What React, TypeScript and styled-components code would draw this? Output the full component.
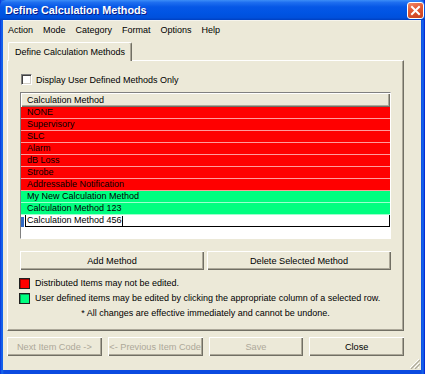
import styled, { createGlobalStyle } from "styled-components";

const Global = createGlobalStyle`
* { box-sizing: border-box; }
body {
  margin: 0;
  font-family: "Liberation Sans", Arial, sans-serif;
  font-size: 9px;
  color: #000;
}
`;

const Frame = styled.div`
width: 425px;
height: 374px;
display: flex;
flex-direction: column;
background: linear-gradient(90deg, #0831d9 0px, #166aee 2px, #0c4be0 4px, #0c4be0 421px, #166aee 423px, #0019cf 425px);
overflow: hidden;
`;

const TitleBar = styled.div`
height: 20px;
flex: none;
display: flex;
align-items: center;
justify-content: space-between;
padding: 0 5px 0 5px;
background: linear-gradient(180deg, #3d8ef7 0%, #1f6ff0 12%, #0657e6 35%, #0054e3 65%, #0050dc 88%, #0040c0 100%);
border-radius: 6px 6px 0 0;
`;

const Title = styled.div`
color: #fff;
font-weight: bold;
font-size: 10.8px;
text-shadow: 1px 1px 0 #0a1e8a;
`;

const CloseBox = styled.div`
width: 17px;
height: 17px;
margin-right: -4px;
border: 1px solid #fff;
border-radius: 3px;
background: linear-gradient(160deg, #f08a6a 0%, #e35a35 40%, #c8401c 100%);
display: flex;
align-items: center;
justify-content: center;
`;

const Client = styled.div`
flex: 1;
margin: 0 4px 4px 3px;
background: #ece9d8;
display: flex;
flex-direction: column;
position: relative;
`;

const MenuBar = styled.div`
height: 18px;
display: flex;
align-items: center;
padding-left: 0;
border-top: 1px solid #f6f4ec;
`;

const MenuItem = styled.span`
padding: 0 5px;
font-size: 9px;
`;

const Body = styled.div`
padding: 4px 0 0 4px;
display: flex;
flex-direction: column;
`;

const TabStrip = styled.div`
display: flex;
padding-left: 1px;
height: 18px;
`;

const Tab = styled.div`
height: 19px;
padding: 0 6px;
display: flex;
align-items: center;
background: #ece9d8;
border-top: 1px solid #fff;
border-left: 1px solid #fff;
border-right: 1px solid #716f64;
border-radius: 2px 2px 0 0;
box-shadow: inset -1px 0 #aca899;
position: relative;
z-index: 1;
`;

const Panel = styled.div`
width: 397px;
height: 271px;
border-top: 1px solid #fff;
border-left: 1px solid #fff;
border-right: 1px solid #716f64;
border-bottom: 1px solid #716f64;
box-shadow: inset -1px -1px #aca899;
padding: 12px 12px 0 12px;
display: flex;
flex-direction: column;
`;

const CheckRow = styled.label`
height: 13px;
display: flex;
align-items: center;
gap: 4px;
margin-bottom: 6px;
padding-left: 1px;
`;

const CheckBox = styled.span`
width: 11px;
height: 11px;
background: #fff;
border-top: 1px solid #808080;
border-left: 1px solid #808080;
border-right: 1px solid #fff;
border-bottom: 1px solid #fff;
box-shadow: inset 1px 1px #404040, inset -1px -1px #d4d0c8;
`;

const ListBox = styled.div`
height: 147px;
background: #fff;
border-top: 1px solid #808080;
border-left: 1px solid #808080;
border-right: 1px solid #fff;
border-bottom: 1px solid #fff;
display: flex;
flex-direction: column;
`;

const Header = styled.div`
height: 14px;
flex: none;
background: #ece9d8;
padding-left: 6px;
display: flex;
align-items: center;
box-shadow: inset 1px 1px #fff, inset -1px -1px #716f64, inset -2px -2px #aca899;
`;

const Row = styled.div<{ $kind: "dist" | "user" }>`
height: 12px;
flex: none;
padding-left: 6px;
line-height: 11px;
background: ${(p) => (p.$kind === "dist" ? "#ff0000" : "#00ff80")};
border-bottom: 1px solid ${(p) => (p.$kind === "dist" ? "#ff9c9c" : "#9cffce")};
white-space: nowrap;
`;

const EditRow = styled.div`
height: 12px;
flex: none;
display: flex;
`;

const Marker = styled.span`
width: 3px;
height: 10px;
margin-top: 2px;
background: #316ac5;
margin-right: 1px;
`;

const EditBox = styled.div`
flex: 1;
border-left: 1px solid #000;
border-right: 1px solid #000;
border-bottom: 1px solid #000;
padding-left: 1px;
line-height: 11px;
display: flex;
align-items: center;
`;

const Caret = styled.span`
display: inline-block;
width: 1px;
height: 10px;
background: #000;
`;

const ButtonPair = styled.div`
display: grid;
grid-template-columns: 1fr 1fr;
gap: 3px;
margin-top: 12px;
`;

const Button = styled.div<{ $disabled?: boolean }>`
height: 19px;
display: flex;
align-items: center;
justify-content: center;
background: #ece9d8;
color: ${(p) => (p.$disabled ? "#aca899" : "#000")};
box-shadow: inset 1px 1px #fff, inset -1px -1px #716f64, inset -2px -2px #aca899;
font-size: 9.2px;
`;

const LegendRow = styled.div<{ $gap: number }>`
height: 14px;
display: flex;
align-items: center;
gap: 5px;
margin-top: ${(p) => p.$gap}px;
margin-left: -1px;
`;

const Swatch = styled.span<{ $color: string }>`
width: 11px;
height: 11px;
background: ${(p) => p.$color};
border: 1px solid #202020;
box-shadow: inset 1px 1px rgba(0, 0, 0, 0.35);
`;

const Note = styled.div`
height: 16px;
display: flex;
align-items: center;
justify-content: center;
`;

const BottomBar = styled.div`
width: 397px;
display: grid;
grid-template-columns: repeat(4, 1fr);
gap: 6px;
margin-top: 6px;
`;

const Grip = styled.svg`
position: absolute;
right: 1px;
bottom: 1px;
`;

const distributed = [
  "NONE",
  "Supervisory",
  "SLC",
  "Alarm",
  "dB Loss",
  "Strobe",
  "Addressable Notification",
];

const userDefined = ["My New Calculation Method", "Calculation Method 123"];

const menus = ["Action", "Mode", "Category", "Format", "Options", "Help"];

export default function App() {
  return (
    <>
      <Global />
      <Frame>
        <TitleBar>
          <Title>Define Calculation Methods</Title>
          <CloseBox>
            <svg width="11" height="11" viewBox="0 0 11 11">
              <path d="M2 2 L9 9 M9 2 L2 9" stroke="#fff" strokeWidth="2" strokeLinecap="square" />
            </svg>
          </CloseBox>
        </TitleBar>
        <Client>
          <MenuBar>
            {menus.map((m) => (
              <MenuItem key={m}>{m}</MenuItem>
            ))}
          </MenuBar>
          <Body>
            <TabStrip>
              <Tab>Define Calculation Methods</Tab>
            </TabStrip>
            <Panel>
              <CheckRow>
                <CheckBox />
                <span>Display User Defined Methods Only</span>
              </CheckRow>
              <ListBox>
                <Header>Calculation Method</Header>
                {distributed.map((r) => (
                  <Row key={r} $kind="dist">{r}</Row>
                ))}
                {userDefined.map((r) => (
                  <Row key={r} $kind="user">{r}</Row>
                ))}
                <EditRow>
                  <Marker />
                  <EditBox>
                    Calculation Method 456
                    <Caret />
                  </EditBox>
                </EditRow>
              </ListBox>
              <ButtonPair>
                <Button>Add Method</Button>
                <Button>Delete Selected Method</Button>
              </ButtonPair>
              <LegendRow $gap={6}>
                <Swatch $color="#ff0000" />
                <span>Distributed Items may not be edited.</span>
              </LegendRow>
              <LegendRow $gap={1}>
                <Swatch $color="#00ff80" />
                <span>User defined items may be edited by clicking the appropriate column of a selected row.</span>
              </LegendRow>
              <Note>* All changes are effective immediately and cannot be undone.</Note>
            </Panel>
            <BottomBar>
              <Button $disabled>Next Item Code -&gt;</Button>
              <Button $disabled>&lt;- Previous Item Code</Button>
              <Button $disabled>Save</Button>
              <Button>Close</Button>
            </BottomBar>
          </Body>
          <Grip width="12" height="12" viewBox="0 0 12 12">
            <path d="M11 2 L2 11 M11 6 L6 11 M11 10 L10 11" stroke="#fff" strokeWidth="1" />
            <path d="M12 3 L3 12 M12 7 L7 12" stroke="#aca899" strokeWidth="1.2" />
          </Grip>
        </Client>
      </Frame>
    </>
  );
}
